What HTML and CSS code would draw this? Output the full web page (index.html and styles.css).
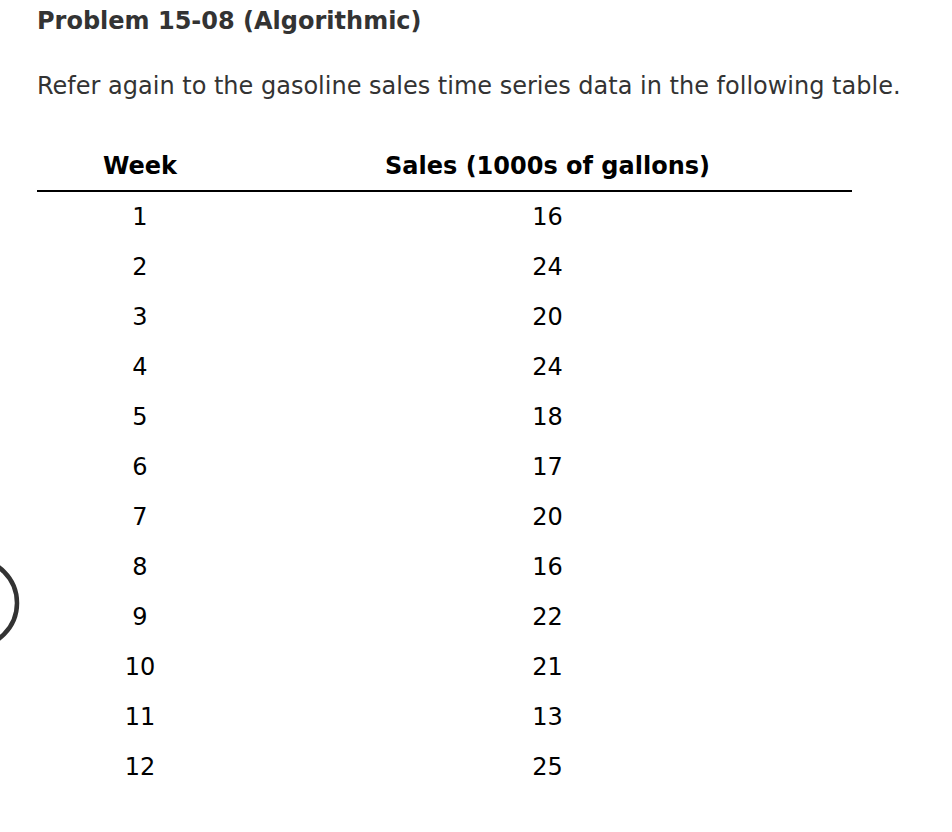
FILE: index.html
```html
<!DOCTYPE html>
<html>
<head>
<meta charset="utf-8">
<link rel="stylesheet" href="styles.css">
</head>
<body>
<div class="page">
  <h1 class="title">Problem 15-08 (Algorithmic)</h1>
  <p class="intro">Refer again to the gasoline sales time series data in the following table.</p>
  <table class="data">
    <thead>
      <tr><th class="c-week">Week</th><th class="c-sales">Sales (1000s of gallons)</th></tr>
    </thead>
    <tbody>
      <tr><td>1</td><td>16</td></tr>
      <tr><td>2</td><td>24</td></tr>
      <tr><td>3</td><td>20</td></tr>
      <tr><td>4</td><td>24</td></tr>
      <tr><td>5</td><td>18</td></tr>
      <tr><td>6</td><td>17</td></tr>
      <tr><td>7</td><td>20</td></tr>
      <tr><td>8</td><td>16</td></tr>
      <tr><td>9</td><td>22</td></tr>
      <tr><td>10</td><td>21</td></tr>
      <tr><td>11</td><td>13</td></tr>
      <tr><td>12</td><td>25</td></tr>
    </tbody>
  </table>
</div>
<svg class="ring" width="40" height="100" viewBox="0 0 40 100">
  <circle cx="-27" cy="48" r="44" fill="none" stroke="#333" stroke-width="4.5"/>
</svg>
</body>
</html>
```
FILE: styles.css
```css
html, body {
  margin: 0;
  padding: 0;
  background: #fff;
}
body {
  font-family: "DejaVu Sans", Verdana, sans-serif;
  color: #333;
  position: relative;
  width: 952px;
  height: 832px;
  overflow: hidden;
}
.page {
  padding: 0 0 0 37px;
}
.title {
  margin: 0;
  padding-top: 7px;
  font-size: 24px;
  line-height: 28px;
  font-weight: bold;
  color: #333;
}
.intro {
  margin: 0;
  padding-top: 37px;
  font-size: 24px;
  line-height: 28px;
  color: #333;
  white-space: nowrap;
}
.data {
  margin-top: 42px;
  width: 815px;
  border-collapse: collapse;
  color: #000;
}
.data th {
  font-size: 24px;
  line-height: 28px;
  font-weight: bold;
  height: 48px;
  padding: 0;
  vertical-align: middle;
  border-bottom: 2px solid #000;
  text-align: center;
}
.c-week { width: 206px; }
.data td {
  font-size: 24px;
  line-height: 28px;
  height: 50px;
  padding: 0;
  text-align: center;
  vertical-align: middle;
}
.ring {
  position: absolute;
  left: 0;
  top: 555px;
}
```
